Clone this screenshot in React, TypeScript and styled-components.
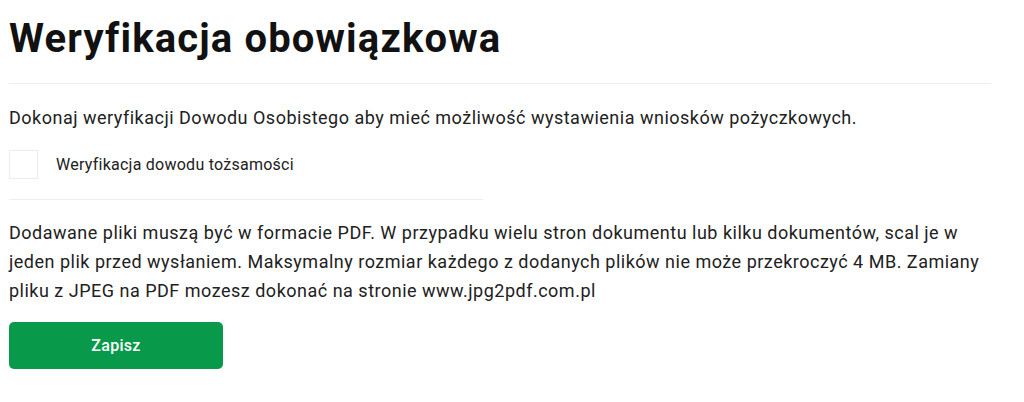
import styled, { createGlobalStyle } from "styled-components";

const GlobalStyle = createGlobalStyle`
    html, body {
        margin: 0;
        padding: 0;
        background: #fff;
    }
    body {
        font-family: Roboto, "Liberation Sans", Arial, sans-serif;
        color: #212121;
    }
`;

const Wrapper = styled.section`
    width: 982px;
    padding: 15px 0 0 9px;
`;

const Title = styled.h1`
    margin: 0;
    font-size: 40px;
    line-height: 48px;
    font-weight: 700;
    letter-spacing: 1.15px;
    color: #111;
`;

const Divider = styled.hr<{ $width?: number }>`
    margin: ${(p) => (p.$width ? "20px 0 18px" : "20px 0 20px")};
    width: ${(p) => (p.$width ? `${p.$width}px` : "100%")};
    height: 1px;
    border: 0;
    background-color: #eeeeee;
`;

const Lead = styled.p`
    margin: 0;
    font-size: 18px;
    line-height: 27px;
    letter-spacing: 0.5px;
`;

const CheckRow = styled.label`
    display: flex;
    align-items: center;
    gap: 18px;
    margin-top: 19px;
    font-size: 16px;
    line-height: 20px;
    letter-spacing: 0.25px;
    cursor: pointer;
`;

const Box = styled.span`
    flex: none;
    width: 27px;
    height: 27px;
    border: 1px solid #ececec;
    background: #fff;
`;

const Note = styled.p`
    margin: 0;
    font-size: 18px;
    line-height: 29px;
    letter-spacing: 0.5px;
`;

const SaveButton = styled.button`
    display: block;
    margin-top: 17px;
    width: 214px;
    height: 47px;
    border: 0;
    border-radius: 5px;
    background-color: #08994b;
    color: #fff;
    font-family: inherit;
    font-size: 16px;
    font-weight: 500;
    letter-spacing: 0.3px;
    cursor: pointer;
`;

const App: React.FC = () => {
    return (
        <>
            <GlobalStyle />
            <Wrapper>
                <Title>Weryfikacja obowiązkowa</Title>
                <Divider />
                <Lead>
                    Dokonaj weryfikacji Dowodu Osobistego aby mieć możliwość wystawienia wniosków pożyczkowych.
                </Lead>
                <CheckRow>
                    <Box />
                    <span>Weryfikacja dowodu tożsamości</span>
                </CheckRow>
                <Divider $width={474} />
                <Note>
                    Dodawane pliki muszą być w formacie PDF. W przypadku wielu stron dokumentu lub kilku dokumentów, scal je w
                    jeden plik przed wysłaniem. Maksymalny rozmiar każdego z dodanych plików nie może przekroczyć 4 MB. Zamiany
                    pliku z JPEG na PDF mozesz dokonać na stronie www.jpg2pdf.com.pl
                </Note>
                <SaveButton type="button">Zapisz</SaveButton>
            </Wrapper>
        </>
    );
};

export default App;
